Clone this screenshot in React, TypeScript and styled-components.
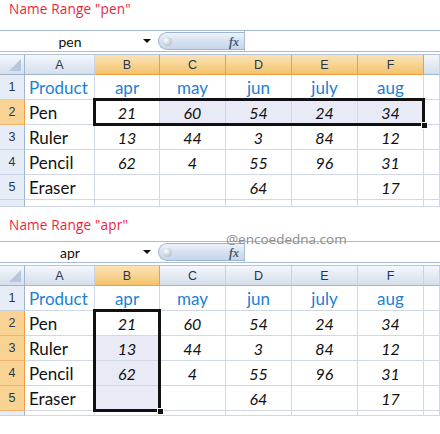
import React from 'react';
import styled, { createGlobalStyle, css } from 'styled-components';

const GlobalStyle = createGlobalStyle`
  html, body {
    margin: 0;
    padding: 0;
    background: #ffffff;
  }
  body {
    width: 440px;
    font-family: Lato, "Liberation Sans", sans-serif;
  }
`;

const COLUMNS = ['A', 'B', 'C', 'D', 'E', 'F'];
const TEMPLATE = '25px 70px 65px 66px 66px 66px 66px 16px';

type CellValue = string | number;

const HEADINGS: CellValue[] = ['Product', 'apr', 'may', 'jun', 'july', 'aug'];
const DATA: CellValue[][] = [
    ['Pen', 21, 60, 54, 24, 34],
    ['Ruler', 13, 44, 3, 84, 12],
    ['Pencil', 62, 4, 55, 96, 31],
    ['Eraser', '', '', 64, '', 17],
];

interface IRange {
    c1: number;
    c2: number;
    r1: number;
    r2: number;
}

const Page = styled.div`
    display: flex;
    flex-direction: column;
`;

const Section = styled.section`
    position: relative;
    display: flex;
    flex-direction: column;
`;

const Title = styled.div<{ $height: number; $pad: number }>`
    height: ${({ $height }) => $height}px;
    box-sizing: border-box;
    padding: ${({ $pad }) => $pad}px 0 0 9px;
    font-family: "Open Sans", sans-serif;
    font-size: 13.6px;
    line-height: 18px;
    letter-spacing: 0.15px;
    color: #ec1f3f;
`;

const FormulaBar = styled.div`
    display: flex;
    height: 22px;
    box-sizing: border-box;
    border-top: 1px solid #a7bcd6;
    border-bottom: 1px solid #a7bcd6;
    background: #ffffff;
`;

const NameBox = styled.div`
    position: relative;
    width: 156px;
    display: flex;
    align-items: center;
    justify-content: center;
    padding-right: 16px;
    box-sizing: border-box;
    font-size: 14px;
    color: #111;
`;

const DropArrow = styled.span`
    position: absolute;
    right: 5px;
    top: 8px;
    width: 0;
    height: 0;
    border-left: 4px solid transparent;
    border-right: 4px solid transparent;
    border-top: 4px solid #111;
`;

const Pill = styled.div`
    display: flex;
    align-items: center;
    justify-content: space-between;
    width: 86px;
    margin: 1px 0 1px 2px;
    padding: 0 5px 0 4px;
    box-sizing: border-box;
    border: 1px solid #9fb4d0;
    border-right: none;
    border-radius: 10px 0 0 10px;
    background: linear-gradient(#eef3fa, #d4e0ef 55%, #c8d6ea);
`;

const Knob = styled.span`
    width: 9px;
    height: 9px;
    border-radius: 50%;
    background: radial-gradient(circle at 35% 35%, #ffffff, #b9c4d2 70%, #9aa6b6);
`;

const Fx = styled.span`
    padding-top: 2px;
    font-family: "Liberation Serif", serif;
    font-style: italic;
    font-weight: bold;
    font-size: 12px;
    color: #4a5a70;
`;

const FormulaInput = styled.div`
    flex: 1;
    border-left: 1px solid #a7bcd6;
    background: #ffffff;
`;

const Spacer = styled.div`
    height: 3px;
    box-sizing: border-box;
    border-bottom: 1px solid #b3c5dc;
`;

const Grid = styled.div<{ $tail: number }>`
    position: relative;
    display: grid;
    grid-template-columns: ${TEMPLATE};
    grid-template-rows: 20px repeat(5, 25px) ${({ $tail }) => $tail}px;
    background: #ffffff;
`;

const headerGradient = css`
    background: linear-gradient(#f4f7fb, #e1e8f2 60%, #d5deea);
`;

const selectedGradient = css`
    background: linear-gradient(#fbe3b6, #f7d18c 60%, #f2c26a);
`;

const Corner = styled.div`
    position: relative;
    ${headerGradient};
    border-right: 1px solid #9eb6ce;
    border-bottom: 1px solid #9eb6ce;
    box-sizing: border-box;

    &::after {
        content: '';
        position: absolute;
        right: 3px;
        bottom: 3px;
        width: 0;
        height: 0;
        border-left: 12px solid transparent;
        border-bottom: 12px solid #b5c6dd;
    }
`;

const ColHeader = styled.div<{ $selected?: boolean }>`
    display: flex;
    align-items: center;
    justify-content: center;
    box-sizing: border-box;
    font-family: "Liberation Sans", sans-serif;
    font-size: 12.5px;
    color: #27364d;
    ${({ $selected }) =>
        $selected
            ? css`
                  ${selectedGradient};
                  border-right: 1px solid #f29b3f;
                  border-bottom: 1px solid #f29b3f;
              `
            : css`
                  ${headerGradient};
                  border-right: 1px solid #c7d3e3;
                  border-bottom: 1px solid #9eb6ce;
              `}
`;

const RowHeader = styled.div<{ $selected?: boolean }>`
    display: flex;
    align-items: center;
    justify-content: center;
    box-sizing: border-box;
    font-family: "Liberation Sans", sans-serif;
    font-size: 12.5px;
    color: #27364d;
    ${({ $selected }) =>
        $selected
            ? css`
                  background: #f8d394;
                  border-right: 1px solid #f29b3f;
                  border-bottom: 1px solid #f3b368;
              `
            : css`
                  background: #e6edf7;
                  border-right: 1px solid #9eb6ce;
                  border-bottom: 1px solid #c7d3e3;
              `}
`;

const Cell = styled.div<{ $align?: 'left' | 'center'; $shaded?: boolean; $kind?: 'head' | 'label' | 'num' }>`
    display: flex;
    align-items: center;
    justify-content: ${({ $align }) => ($align === 'left' ? 'flex-start' : 'center')};
    padding: 1px 4px 0;
    box-sizing: border-box;
    border-right: 1px solid #d0d7e5;
    border-bottom: 1px solid #d0d7e5;
    background: ${({ $shaded }) => ($shaded ? '#e8eaf5' : '#ffffff')};
    white-space: nowrap;
    font-size: ${({ $kind }) => ($kind === 'num' ? '16px' : '17px')};
    font-style: ${({ $kind }) => ($kind === 'num' ? 'italic' : 'normal')};
    color: ${({ $kind }) => ($kind === 'head' ? '#1b7fd4' : '#111111')};
`;

/* absolutely positioned grid child: sits over its grid area, takes no slot */
const Selection = styled.div<{ $area: string }>`
    position: absolute;
    grid-area: ${({ $area }) => $area};
    top: -2px;
    left: -2px;
    right: -1px;
    bottom: -1px;
    border: 3px solid #111111;
    pointer-events: none;
`;

const FillHandle = styled.span`
    position: absolute;
    right: -6px;
    bottom: -6px;
    width: 5px;
    height: 5px;
    background: #111111;
    border: 1px solid #ffffff;
`;

const Watermark = styled.div`
    position: absolute;
    left: 226px;
    top: 23px;
    font-family: "Open Sans", sans-serif;
    font-size: 13.5px;
    line-height: 18px;
    color: #8d8d8d;
    pointer-events: none;
`;

interface ISheetProps {
    title: string;
    name: string;
    range: IRange;
    titleHeight: number;
    titlePad: number;
    tail: number;
    watermark?: string;
}

const inRange = (range: IRange, r: number, c: number) =>
    r >= range.r1 && r <= range.r2 && c >= range.c1 && c <= range.c2;

const Sheet = ({ title, name, range, titleHeight, titlePad, tail, watermark }: ISheetProps) => {
    const rows = [HEADINGS, ...DATA];
    const area = `${range.r1 + 1} / ${range.c1 + 2} / ${range.r2 + 2} / ${range.c2 + 3}`;

    return (
        <Section>
            <Title $height={titleHeight} $pad={titlePad}>
                {title}
            </Title>
            <FormulaBar>
                <NameBox>
                    {name}
                    <DropArrow />
                </NameBox>
                <Pill>
                    <Knob />
                    <Fx>fx</Fx>
                </Pill>
                <FormulaInput />
            </FormulaBar>
            <Spacer />
            <Grid $tail={tail}>
                <Corner />
                {COLUMNS.map((col, c) => (
                    <ColHeader key={col} $selected={c >= range.c1 && c <= range.c2}>
                        {col}
                    </ColHeader>
                ))}
                <ColHeader />

                {rows.map((row, ri) => {
                    const r = ri + 1;
                    return (
                        <React.Fragment key={r}>
                            <RowHeader $selected={r >= range.r1 && r <= range.r2}>{r}</RowHeader>
                            {row.map((value, c) => {
                                const active = r === range.r1 && c === range.c1;
                                const kind = r === 1 ? 'head' : c === 0 ? 'label' : 'num';
                                return (
                                    <Cell
                                        key={c}
                                        $align={c === 0 ? 'left' : 'center'}
                                        $kind={kind}
                                        $shaded={inRange(range, r, c) && !active}
                                    >
                                        {value}
                                    </Cell>
                                );
                            })}
                            <Cell />
                        </React.Fragment>
                    );
                })}

                <RowHeader />
                {COLUMNS.map((col) => (
                    <Cell key={col} />
                ))}
                <Cell />

                <Selection $area={area}>
                    <FillHandle />
                </Selection>
            </Grid>
            {watermark && <Watermark>{watermark}</Watermark>}
        </Section>
    );
};

export default function App() {
    return (
        <Page>
            <GlobalStyle />
            <Sheet
                title={'Name Range "pen"'}
                name="pen"
                range={{ r1: 2, r2: 2, c1: 1, c2: 5 }}
                titleHeight={30}
                titlePad={0}
                tail={7}
            />
            <Sheet
                title={'Name Range "apr"'}
                name="apr"
                range={{ r1: 2, r2: 5, c1: 1, c2: 1 }}
                titleHeight={34}
                titlePad={9}
                tail={5}
                watermark="@encoededna.com"
            />
        </Page>
    );
}
